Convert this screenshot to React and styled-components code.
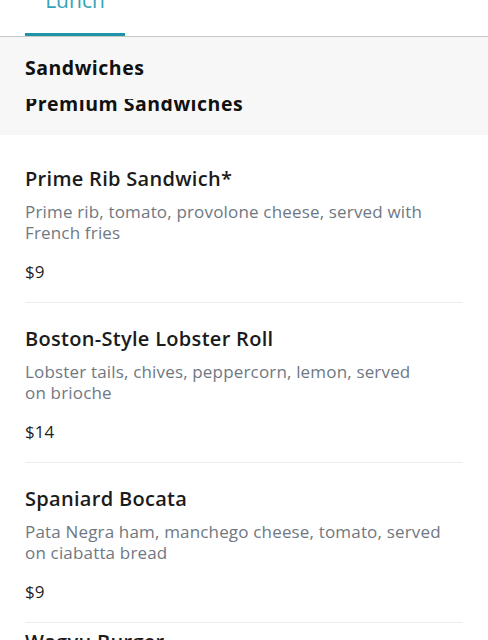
import React from "react";
import styled, { createGlobalStyle } from "styled-components";

const GlobalStyle = createGlobalStyle`
  html, body { margin: 0; padding: 0; background: #ffffff; }
  body { font-family: "Open Sans", Lato, sans-serif; -webkit-font-smoothing: antialiased; }
  * { box-sizing: border-box; }
`;

const Screen = styled.div`
  width: 488px;
  height: 640px;
  overflow: hidden;
  background: #ffffff;
`;

const TabBar = styled.nav`
  display: flex;
  height: 37px;
  padding: 0 25px;
  border-bottom: 1px solid #c9c9c9;
  overflow: hidden;
`;

const Tab = styled.div`
  width: 100px;
  display: flex;
  justify-content: center;
  align-items: flex-start;
  border-bottom: 3px solid ${(p) => (p.$active ? "#1f93a8" : "transparent")};
  overflow: hidden;
`;

const TabLabel = styled.span`
  margin-top: -12px;
  font-size: 21px;
  line-height: 24px;
  color: #35a3b7;
`;

const CategoryPanel = styled.section`
  background: #f7f7f7;
  height: 98px;
  padding: 0 25px;
  display: flex;
  flex-direction: column;
`;

const Category = styled.div`
  font-size: 19.5px;
  font-weight: 700;
  letter-spacing: 0.5px;
  color: #111111;
  line-height: 24px;
  white-space: nowrap;
`;

const FirstCategory = styled(Category)`
  margin-top: 19px;
`;

const CategoryClip = styled.div`
  margin-top: 19px;
  height: 18px;
  overflow: hidden;
  ${Category} { margin-top: -7px; }
`;

const ItemList = styled.div`
  padding: 8px 25px 0;
`;

const Item = styled.article`
  padding: ${(p) => (p.$peek ? "7px" : "24px")} 0 20px;
  border-bottom: 1px solid #ececec;
`;

const ItemTitle = styled.h3`
  margin: 0;
  font-size: 20px;
  line-height: 24px;
  font-weight: 600;
  letter-spacing: 0.3px;
  color: #1b1b1b;
  white-space: nowrap;
`;

const Description = styled.p`
  margin: 11px 0 0;
  font-size: 17px;
  line-height: 20.5px;
  letter-spacing: 0.17px;
  color: #6f7882;
`;

const DescLine = styled.span`
  display: block;
  white-space: nowrap;
`;

const Price = styled.div`
  margin-top: 19px;
  font-size: 17px;
  line-height: 20px;
  color: #1f1f1f;
`;

const items = [
  {
    title: "Prime Rib Sandwich*",
    desc: ["Prime rib, tomato, provolone cheese, served with", "French fries"],
    price: "$9",
  },
  {
    title: "Boston-Style Lobster Roll",
    desc: ["Lobster tails, chives, peppercorn, lemon, served", "on brioche"],
    price: "$14",
  },
  {
    title: "Spaniard Bocata",
    desc: ["Pata Negra ham, manchego cheese, tomato, served", "on ciabatta bread"],
    price: "$9",
  },
];

export default function App() {
  return (
    <Screen>
      <GlobalStyle />
      <TabBar>
        <Tab $active>
          <TabLabel>Lunch</TabLabel>
        </Tab>
      </TabBar>
      <CategoryPanel>
        <FirstCategory>Sandwiches</FirstCategory>
        <CategoryClip>
          <Category>Premium Sandwiches</Category>
        </CategoryClip>
      </CategoryPanel>
      <ItemList>
        {items.map((it) => (
          <Item key={it.title}>
            <ItemTitle>{it.title}</ItemTitle>
            <Description>
              {it.desc.map((l) => (
                <DescLine key={l}>{l}</DescLine>
              ))}
            </Description>
            <Price>{it.price}</Price>
          </Item>
        ))}
        <Item $peek>
          <ItemTitle>Wagyu Burger</ItemTitle>
        </Item>
      </ItemList>
    </Screen>
  );
}
